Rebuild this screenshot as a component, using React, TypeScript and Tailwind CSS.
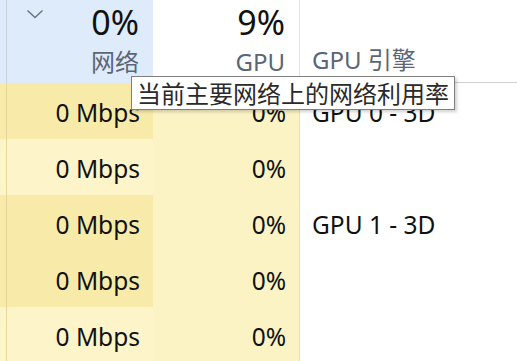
import React from 'react';

const rows = [
  { net: '0 Mbps', gpu: '0%', engine: 'GPU 0 - 3D', dark: true },
  { net: '0 Mbps', gpu: '0%', engine: '', dark: false },
  { net: '0 Mbps', gpu: '0%', engine: 'GPU 1 - 3D', dark: true },
  { net: '0 Mbps', gpu: '0%', engine: '', dark: true },
  { net: '0 Mbps', gpu: '0%', engine: '', dark: false },
];

const font = { fontFamily: '"Noto Sans", "Noto Sans CJK SC", sans-serif' };

export default function App() {
  return (
    <div className="relative w-[517px] h-[361px] overflow-hidden bg-white text-[#1b1b1b]" style={font}>
      {/* header */}
      <div className="grid grid-cols-[7px_146px_147px_1fr] h-[83px]">
        <div className="bg-[#deebfb] border-r border-[#c9d3de]" />
        <div className="relative bg-[#deebfb] flex flex-col items-end pr-[14px]">
          <svg className="absolute left-[19px] top-[9px]" width="18" height="10" viewBox="0 0 18 10">
            <path d="M1.5 1.5 L9 8.5 L16.5 1.5" fill="none" stroke="#6b7280" strokeWidth="1.4" />
          </svg>
          <span className="text-[34px] leading-[44px] text-[#111]">0%</span>
          <span className="text-[24px] leading-[30px] mt-[3px] text-[#5b6577]">网络</span>
        </div>
        <div className="flex flex-col items-end pr-[14px] border-r border-[#e3e3e3]">
          <span className="text-[34px] leading-[44px] text-[#111]">9%</span>
          <span className="text-[24px] leading-[30px] mt-[3px] text-[#5b6577]">GPU</span>
        </div>
        <div className="flex flex-col justify-end pl-[12px] pb-[7px] border-b border-[#cfcfcf]">
          <span className="text-[24px] leading-[30px] text-[#5b6577]">GPU 引擎</span>
        </div>
      </div>

      {/* rows */}
      {rows.map((r, i) => (
        <div key={i} className="grid grid-cols-[7px_146px_147px_1fr] h-[56px]">
          <div className={`${r.dark ? 'bg-[#f8eba9]' : 'bg-[#fdf4ca]'} border-r border-[#e6d89a]`} />
          <div className={`${r.dark ? 'bg-[#f8eba9]' : 'bg-[#fdf4ca]'} flex items-center justify-end pr-[13px] pt-[4px]`}>
            <span className="text-[24.5px] leading-none text-[#111]">{r.net}</span>
          </div>
          <div className="bg-[#fcf3c5] flex items-center justify-end pr-[13px] pt-[4px] border-r border-[#ede1a8]">
            <span className="text-[24.5px] leading-none text-[#111]">{r.gpu}</span>
          </div>
          <div className="flex items-center pl-[12px] pt-[4px]">
            <span className="text-[24.5px] leading-none text-[#111]">{r.engine}</span>
          </div>
        </div>
      ))}

      {/* tooltip */}
      <div className="absolute left-[131px] top-[76px] h-[34px] px-[5px] flex items-center bg-white border border-[#808080] shadow-[2px_2px_3px_rgba(0,0,0,0.18)]">
        <span className="text-[24px] leading-none text-[#2a2a2a]" style={{ fontFamily: '"Noto Sans CJK SC", sans-serif' }}>
          当前主要网络上的网络利用率
        </span>
      </div>
    </div>
  );
}
